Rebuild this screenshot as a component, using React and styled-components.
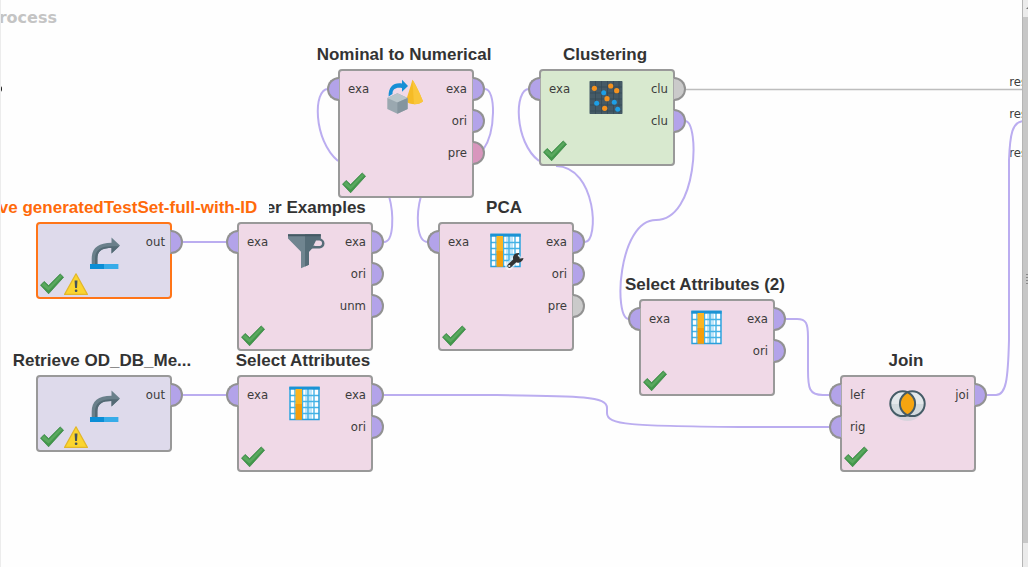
import React from "react";
import styled, { createGlobalStyle, css } from "styled-components";

const GlobalStyle = createGlobalStyle`
  *, *::before, *::after { box-sizing: border-box; }
  body {
    margin: 0;
    background: #fefefe;
    color: #333;
    font-family: "Liberation Sans", Arial, sans-serif;
  }
`;

const PORT_COLORS = {
  data: "#b3a3e9",
  idle: "#cacaca",
  model: "#d896bd",
};

const NODE_COLORS = {
  transform: "#f0d9e7",
  source: "#dedaeb",
  modeling: "#d8e9cf",
};

const Workspace = styled.main`
  display: flex;
  height: 100vh;
  overflow: hidden;
`;

const Canvas = styled.section`
  position: relative;
  flex: 1;
  min-width: 0;
  overflow: hidden;
  border-left: 1px solid #ececec;
`;

const ProcessTitle = styled.h1`
  position: absolute;
  left: -14px;
  top: 8px;
  margin: 0;
  font: bold 16px/20px "DejaVu Sans", sans-serif;
  color: #c4c4c4;
`;

const Wires = styled.svg`
  position: absolute;
  left: -1px;
  top: 0;
  overflow: visible;
  fill: none;
  stroke: #bbadf0;
  stroke-width: 2;
`;

const NodeFrame = styled.article`
  position: absolute;
  left: ${(p) => p.$x - 1}px;
  top: ${(p) => p.$y - 24}px;
  width: 136px;
  display: flex;
  flex-direction: column;
  align-items: center;
  z-index: ${(p) => (p.$selected ? 2 : 1)};
`;

const NodeTitle = styled.h2`
  margin: 0 4px 4px 0;
  white-space: nowrap;
  font-size: 17px;
  line-height: 20px;
  font-weight: bold;
  ${(p) =>
    p.$selected &&
    css`
      margin-right: 0;
      padding: 0 12px;
      color: #ff6a0a;
      background: #fefefe;
    `}
`;

const NodeBox = styled.div`
  width: 100%;
  height: ${(p) => p.$height}px;
  display: flex;
  flex-direction: column;
  justify-content: space-between;
  border: 2px solid ${(p) => (p.$selected ? "#ff7518" : "#999")};
  border-radius: 4px;
  background: ${(p) => NODE_COLORS[p.$kind]};
`;

const NodeBody = styled.div`
  display: grid;
  grid-template-columns: 1fr 40px 1fr;
  height: 47px;
`;

const PortList = styled.ul`
  list-style: none;
  margin: 0;
  padding: 2px 0 0;
`;

const PortRow = styled.li`
  display: flex;
  align-items: center;
  flex-direction: ${(p) => (p.$out ? "row-reverse" : "row")};
  gap: ${(p) => (p.$out ? 5 : 8)}px;
  height: 32px;
  margin: ${(p) => (p.$out ? "0 -13px 0 0" : "0 0 0 -13px")};
`;

const PortDot = styled.span`
  flex: none;
  width: 13px;
  height: 24px;
  border: 2px solid #929292;
  background: ${(p) => PORT_COLORS[p.$type]};
  ${(p) =>
    p.$out
      ? "border-left: 1px solid #aaa; border-radius: 0 12px 12px 0;"
      : "border-right: 1px solid #aaa; border-radius: 12px 0 0 12px;"}
`;

const PortLabel = styled.span`
  font: 13px/16px "DejaVu Sans Condensed", "DejaVu Sans", sans-serif;
  font-stretch: condensed;
  color: #3c3c3c;
`;

const NodeIcon = styled.svg`
  width: 40px;
  height: 40px;
  margin-top: 7px;
  overflow: visible;
`;

const NodeStatus = styled.footer`
  display: flex;
  gap: 0;
  padding: 0 0 2px 2px;
`;

const StatusIcon = styled.svg`
  width: 24px;
  height: 22px;
`;

const ResultPorts = styled.ul`
  position: absolute;
  right: -5px;
  top: 72px;
  margin: 0;
  padding: 0;
  list-style: none;
  display: grid;
  grid-template-rows: 32px 39px 16px;
`;

const EntryPort = styled.span`
  position: absolute;
  left: -4px;
  top: 86px;
  width: 5px;
  height: 6px;
  border-radius: 3px;
  background: #222;
`;

const ScrollBar = styled.aside`
  flex: none;
  width: 6px;
  display: flex;
  flex-direction: column;
  overflow: hidden;
  border-left: 1px solid #b5b5b5;
  background: #ebebeb;
`;

const ScrollArrow = styled.svg`
  flex: none;
  width: 5px;
  height: 17px;
`;

const ScrollThumb = styled.div`
  flex: 1;
  margin-bottom: 24px;
  display: flex;
  align-items: center;
  justify-content: flex-end;
  background: #c7c7c7;
`;

const ScrollGrip = styled.span`
  width: 2px;
  height: 12px;
  background: repeating-linear-gradient(#8a8a8a 0 1px, #c7c7c7 1px 3px);
`;

function CheckIcon() {
  return (
    <StatusIcon viewBox="0 0 24 22" role="img" aria-label="Ready">
      <path d="M.5 12.2 4.2 8.4 8.6 12.6 20.2.9 23.6 4.2 8.6 20.8Z" fill="#43984b" stroke="#358442" strokeWidth=".7" />
      <path d="M1.6 12.2 4.2 9.6 8.6 14 20.2 2.1 22 3.8 8.6 17.5Z" fill="#5aa85f" />
    </StatusIcon>
  );
}

function WarningIcon() {
  return (
    <StatusIcon viewBox="0 0 24 22" role="img" aria-label="Warning">
      <path d="M12 .8 23.4 21.4H.6Z" fill="#fbd52f" stroke="#e2b62a" strokeWidth="1.2" strokeLinejoin="round" />
      <path d="M10.6 7.500h2.900l-.5 7.500h-1.900Z" fill="#45535b" />
      <rect x="10.800" y="16.400" width="2.600" height="2.600" rx="1" fill="#45535b" />
    </StatusIcon>
  );
}

function TableArt() {
  return (
    <>
      <rect x="4.500" y="3" width="30" height="33" fill="#fff" />
      <path d="M20 6h7v30h-7z" fill="#a8dcf6" opacity=".7" />
      <path d="M5 11.500h29M5 17.500h29M5 23.500h29M5 29.500h29M10 5v31M17.500 5v31M23 5v31M29 5v31" stroke="#45b3e6" strokeWidth="1.400" />
      <rect x="5" y="3.500" width="29" height="32" fill="none" stroke="#2b9fdb" strokeWidth="1.500" />
      <path d="M4.400 2.700h30.200v3H4.400z" fill="#1b93d4" />
      <path d="M10.500 5h6.500v16.500h-6.500z" fill="#fcb521" />
      <path d="M10.500 20h6.500v15.800h-6.500z" fill="#f59e0b" />
    </>
  );
}

const ICONS = {
  convert: (
    <>
      <path d="M26.400 1.800C24.500 9 21.800 17 20 23c3 4 13 4.600 17 .3C34 16 30 7 26.400 1.800Z" fill="#f5bb26" />
      <path d="M26.400 1.800 28 26.300c3.500.1 7-.8 9-3C34 16 30 7 26.400 1.800Z" fill="#fac63a" />
      <path d="M2.600 18.500C2.500 8.500 8 4.300 16 5.600V1.800L22 8l-6 5.800V10C10 8.800 6.400 11 6.500 16Z" fill="#168fd5" />
      <path d="M11.400 15.200 21.600 20v11L11.400 35.700 1.300 31V20Z" fill="#9aa8b0" />
      <path d="M11.400 15.200 21.600 20 11.400 24.600 1.300 20Z" fill="#bac5ca" />
      <path d="M11.400 24.600 21.600 20v11L11.400 35.700Z" fill="#85959e" />
    </>
  ),
  cluster: (
    <>
      <rect x="2.500" y="3" width="33" height="33" rx=".8" fill="#455a66" />
      <path d="M8.500 3v33M14.500 3v33M20.500 3v33M26.500 3v33M32 3v33M3 9h32M3 15h32M3 21h32M3 27h32M3 33h32" stroke="#364a55" strokeWidth=".8" />
      <g fill="#f5921e">
        <circle cx="7.400" cy="10.300" r="2.600" />
        <circle cx="23.700" cy="8" r="2.600" />
        <circle cx="29.700" cy="12.700" r="2.600" />
        <circle cx="20" cy="20.700" r="2.600" />
        <circle cx="17.700" cy="30.300" r="2.600" />
      </g>
      <g fill="#1e9fe6">
        <circle cx="16.700" cy="14.700" r="2.500" />
        <circle cx="9.700" cy="25.300" r="2.500" />
        <circle cx="27.300" cy="24.300" r="2.500" />
        <circle cx="30.700" cy="31.300" r="2.500" />
      </g>
    </>
  ),
  funnel: (
    <>
      <path d="M33 8.800h1.500a3.600 3.600 0 0 1 0 7.400H27" fill="none" stroke="#566d78" strokeWidth="2.600" />
      <path d="M3 3.200h32.700V8L24 20.800v13L16 37.200V20.800L3 7.400Z" fill="#708590" />
      <path d="M20 3.200h15.700V8L24 20.800v13L20 35.500Z" fill="#566d78" />
      <path d="M3 3.200h32.700v2H3z" fill="#455a64" />
      <path d="M31 9.500h3.200a2.300 2.300 0 0 1 0 5.200h-5.800Z" fill="#f0d9e7" />
    </>
  ),
  table: <TableArt />,
  tableTool: (
    <>
      <TableArt />
      <g stroke="#fff" strokeWidth="8" strokeLinecap="round" opacity=".55">
        <path d="M23 35 31 27.500" />
      </g>
      <path d="M23.500 34.800 31.500 27.200" stroke="#333" strokeWidth="4.200" strokeLinecap="round" />
      <path d="M33.500 22c-4-.6-7 2-6.500 5.600.5 3.200 3.600 4.800 6.500 3.800 2.200-.8 3.700-2.300 4-4.500l-4.400.800-1.800-2.200Z" fill="#333" />
      <circle cx="23.300" cy="35" r="1.100" fill="#eee" />
    </>
  ),
  retrieve: (
    <>
      <path d="M6 33h28.400v5H6z" fill="#37ace9" />
      <path d="M6 33h14v5H6z" fill="#0b8ed6" />
      <path d="M7.700 33V27.500C7.700 17.500 14 11.800 27.500 11.800V6.400L36 14.500l-8.500 8V17C18 17 13.400 20 13.400 27.500V33Z" fill="#6a808b" />
      <path d="M11 33V27.500C11 19 17 15 28 15.200h7.300L27.500 22.500V17C18 17 13.400 20 13.400 27.500V33Z" fill="#546a75" />
    </>
  ),
  join: (
    <>
      <circle cx="14.700" cy="19.700" r="12.400" fill="#e3e8eb" />
      <circle cx="24.300" cy="19.700" r="12.400" fill="#e3e8eb" />
      <path d="M2.500 20a12.400 12.400 0 0 0 34 0Z" fill="#c7d0d5" opacity=".6" />
      <path d="M19.500 8.200a12.400 12.400 0 0 1 0 23 12.400 12.400 0 0 1 0-23Z" fill="#f6a510" />
      <g fill="none" stroke="#455c67" strokeWidth="2">
        <circle cx="14.700" cy="19.700" r="12.400" />
        <circle cx="24.300" cy="19.700" r="12.400" />
      </g>
    </>
  ),
};

const NODES = [
  {
    title: "Nominal to Numerical", x: 338, y: 69, height: 129, kind: "transform", icon: "convert",
    inputs: [["exa", "data"]], outputs: [["exa", "data"], ["ori", "data"], ["pre", "model"]],
  },
  {
    title: "Clustering", x: 539, y: 69, height: 97, kind: "modeling", icon: "cluster",
    inputs: [["exa", "data"]], outputs: [["clu", "idle"], ["clu", "data"]],
  },
  {
    title: "Filter Examples", x: 237, y: 222, height: 129, kind: "transform", icon: "funnel",
    inputs: [["exa", "data"]], outputs: [["exa", "data"], ["ori", "data"], ["unm", "data"]],
  },
  {
    title: "PCA", x: 438, y: 222, height: 129, kind: "transform", icon: "tableTool",
    inputs: [["exa", "data"]], outputs: [["exa", "data"], ["ori", "data"], ["pre", "idle"]],
  },
  {
    title: "Retrieve generatedTestSet-full-with-ID", x: 36, y: 222, height: 77, kind: "source", icon: "retrieve",
    inputs: [], outputs: [["out", "data"]], warning: true, selected: true,
  },
  {
    title: "Select Attributes (2)", x: 639, y: 299, height: 97, kind: "transform", icon: "table",
    inputs: [["exa", "data"]], outputs: [["exa", "data"], ["ori", "data"]],
  },
  {
    title: "Retrieve OD_DB_Me...", x: 36, y: 375, height: 77, kind: "source", icon: "retrieve",
    inputs: [], outputs: [["out", "data"]], warning: true,
  },
  {
    title: "Select Attributes", x: 237, y: 375, height: 97, kind: "transform", icon: "table",
    inputs: [["exa", "data"]], outputs: [["exa", "data"], ["ori", "data"]],
  },
  {
    title: "Join", x: 840, y: 375, height: 97, kind: "transform", icon: "join",
    inputs: [["lef", "data"], ["rig", "data"]], outputs: [["joi", "data"]],
  },
];

function Ports({ ports, out }) {
  return (
    <PortList>
      {ports.map(([label, type], i) => (
        <PortRow key={i} $out={out}>
          <PortDot $type={type} $out={out} />
          <PortLabel>{label}</PortLabel>
        </PortRow>
      ))}
    </PortList>
  );
}

function OperatorNode({ title, x, y, height, kind, icon, inputs, outputs, warning, selected }) {
  return (
    <NodeFrame $x={x} $y={y} $selected={selected}>
      <NodeTitle $selected={selected}>{title}</NodeTitle>
      <NodeBox $height={height} $kind={kind} $selected={selected}>
        <NodeBody>
          <Ports ports={inputs} />
          <NodeIcon viewBox="0 0 40 40" aria-hidden="true">{ICONS[icon]}</NodeIcon>
          <Ports ports={outputs} out />
        </NodeBody>
        <NodeStatus>
          <CheckIcon />
          {warning && <WarningIcon />}
        </NodeStatus>
      </NodeBox>
    </NodeFrame>
  );
}

export default function App() {
  return (
    <>
      <GlobalStyle />
      <Workspace>
        <Canvas aria-label="Process canvas">
          <ProcessTitle>Process</ProcessTitle>
          <EntryPort />
          <ResultPorts>
            {[1, 2, 3].map((n) => (
              <li key={n}><PortLabel>res</PortLabel></li>
            ))}
          </ResultPorts>
          <Wires width="1028" height="567" aria-hidden="true">
            <path d="M183 242H227M183 395H227" />
            <path d="M384 242C394 242 394 214 389 196M338 161C313 140 313 89 328 89" />
            <path d="M485 89C496 89 496 132 483 150M421 196C416 214 416 242 428 242" />
            <path d="M585 242C599 242 597 167 556 166M539 161C514 142 514 89 529 89" />
            <path d="M685 121C700 121 698 220 656 220C618 220 613 319 629 319" />
            <path d="M786 319H797C806 319 808 323 808 337V370C808 388 809 395 823 395H830" />
            <path d="M384 395H490C580 396 607 396 607 408V413C607 425 630 426 740 427H830" />
            <path d="M987 395H996C1006 395 1008 380 1009 340V160C1010 135 1012 121 1024 121" />
            <path d="M685 89.500H1028" stroke="#bdbdbd" strokeWidth="1.400" />
          </Wires>
          {NODES.map((node) => (
            <OperatorNode key={node.title} {...node} />
          ))}
        </Canvas>
        <ScrollBar aria-label="Scroll bar">
          <ScrollArrow viewBox="0 0 5 17" aria-hidden="true">
            <path d="M3 9 6 6v3Z" fill="#777" />
          </ScrollArrow>
          <ScrollThumb><ScrollGrip /></ScrollThumb>
        </ScrollBar>
      </Workspace>
    </>
  );
}
